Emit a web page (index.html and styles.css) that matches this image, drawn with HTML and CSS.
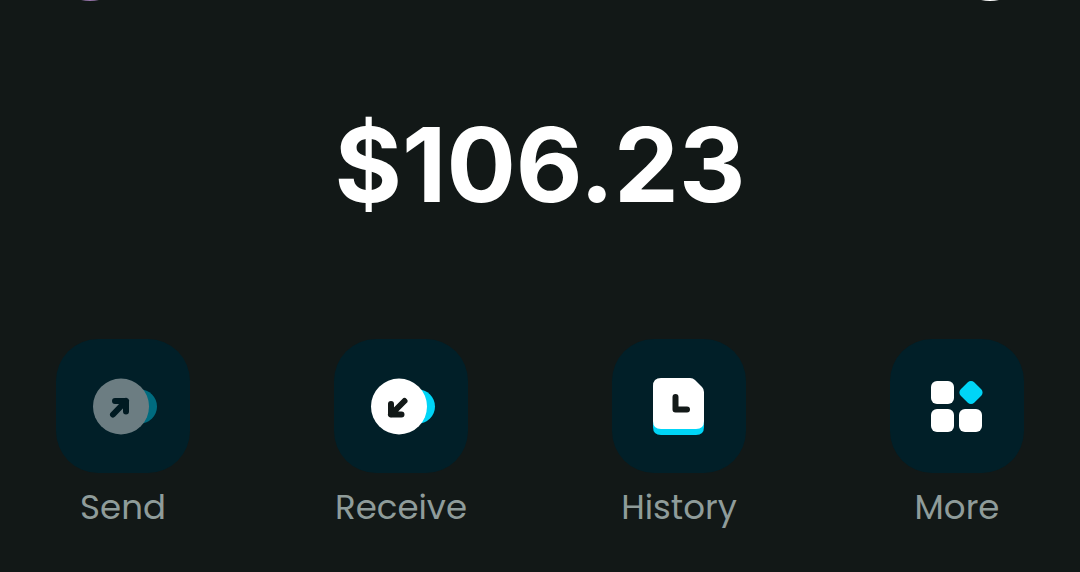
FILE: index.html
```html
<!DOCTYPE html>
<html lang="en">
<head>
<meta charset="utf-8">
<meta name="viewport" content="width=device-width, initial-scale=1">
<title>Wallet</title>
<link rel="stylesheet" href="styles.css">
</head>
<body>
<header class="topbar">
  <span class="avatar avatar-profile"></span>
  <span class="avatar avatar-scan"></span>
</header>
<main class="wallet">
  <h1 class="balance">$106.23</h1>
  <nav class="actions">
    <button class="action" type="button" disabled>
      <span class="tile">
        <svg class="icon icon-muted" viewBox="0 0 134 134" aria-hidden="true">
          <circle class="accent" cx="84" cy="67.500" r="17"/>
          <circle class="light" cx="65" cy="67.500" r="28"/>
          <path class="stroke" d="M59 62H70V72.500M70 62L57 75.500"/>
        </svg>
      </span>
      <span class="label">Send</span>
    </button>
    <button class="action" type="button">
      <span class="tile">
        <svg class="icon" viewBox="0 0 134 134" aria-hidden="true">
          <circle class="accent" cx="84" cy="67.500" r="17"/>
          <circle class="light" cx="65" cy="67.500" r="28"/>
          <path class="stroke" d="M57 65V75.500H67.500M57 75.500L70.500 62"/>
        </svg>
      </span>
      <span class="label">Receive</span>
    </button>
    <button class="action" type="button">
      <span class="tile">
        <svg class="icon" viewBox="0 0 134 134" aria-hidden="true">
          <path class="accent" d="M41 78H92V88Q92 96 84 96H49Q41 96 41 88Z"/>
          <path class="light" d="M49 39H78Q81 39 83 41L90 48Q92 50 92 53V82Q92 90 84 90H49Q41 90 41 82V47Q41 39 49 39Z"/>
          <path class="stroke" d="M63.500 58V70.500H75"/>
        </svg>
      </span>
      <span class="label">History</span>
    </button>
    <button class="action" type="button">
      <span class="tile">
        <svg class="icon" viewBox="0 0 134 134" aria-hidden="true">
          <rect class="light" x="41" y="42" width="23" height="23" rx="6"/>
          <rect class="light" x="41" y="70" width="23" height="23" rx="6"/>
          <rect class="light" x="69" y="70" width="23" height="23" rx="6"/>
          <rect class="accent" x="71.500" y="44" width="19" height="19" rx="4.500" transform="rotate(45 81 53.500)"/>
        </svg>
      </span>
      <span class="label">More</span>
    </button>
  </nav>
</main>
</body>
</html>
```
FILE: styles.css
```css
* {
  box-sizing: border-box;
}

body {
  margin: 0;
  background: #121817;
  color: #fff;
  font-family: Inter, sans-serif;
}

.topbar {
  display: flex;
  align-items: flex-end;
  justify-content: space-between;
  height: 1px;
  padding: 0 50px;
  overflow: hidden;
}

.avatar {
  flex: none;
  width: 80px;
  height: 80px;
  border-radius: 50%;
}

.avatar-profile {
  background: #9574a8;
}

.avatar-scan {
  background: #fff;
}

.wallet {
  padding: 104px 56px 0;
}

.balance {
  margin: 0;
  font-size: 103px;
  font-weight: 700;
  line-height: 120px;
  text-align: center;
}

.actions {
  display: flex;
  justify-content: space-between;
  margin-top: 114px;
}

.action {
  display: flex;
  flex-direction: column;
  align-items: center;
  gap: 12px;
  width: 134px;
  padding: 0;
  border: 0;
  background: none;
  color: #8f9c9a;
  font-family: Poppins, Inter, sans-serif;
  cursor: pointer;
}

.action:disabled {
  cursor: default;
}

.tile {
  display: block;
  width: 134px;
  height: 134px;
  border-radius: 42px;
  background: #011f28;
}

.icon {
  display: block;
  width: 100%;
  height: 100%;
}

.icon-muted {
  opacity: 0.42;
}

.icon-muted .stroke {
  stroke: #00141b;
}

.light {
  fill: #fff;
}

.accent {
  fill: #00d5f7;
}

.stroke {
  fill: none;
  stroke: #131918;
  stroke-width: 6;
  stroke-linecap: round;
  stroke-linejoin: round;
}

.label {
  font-size: 34px;
  font-weight: 400;
  line-height: 44px;
}
```
